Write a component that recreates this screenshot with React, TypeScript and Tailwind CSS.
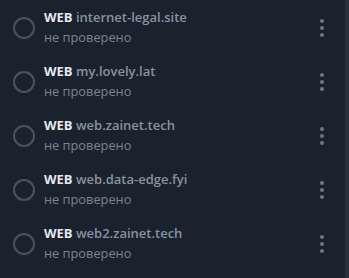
const sites = [
  "internet-legal.site",
  "my.lovely.lat",
  "web.zainet.tech",
  "web.data-edge.fyi",
  "web2.zainet.tech",
];

export default function App() {
  return (
    <div className="flex h-[278px] w-[349px] bg-[#1a222d] font-['Open_Sans',sans-serif]">
      <div className="flex-1 pt-[1px]">
        {sites.map((site) => (
          <div key={site} className="flex h-[54px] items-center">
            <div className="ml-[13px] h-[22px] w-[22px] rounded-full border-2 border-[#4a5461]" />
            <div className="ml-[9px] flex-1 -mt-[3px]">
              <div className="text-[13px] leading-[18px] font-semibold">
                <span className="font-bold text-[#e6e9ec]">WEB</span>{" "}
                <span className="text-[#8793a1]">{site}</span>
              </div>
              <div className="mt-[2px] text-[12.8px] leading-[18px] text-[#7a8592]">
                не проверено
              </div>
            </div>
            <div className="mr-[21px] flex flex-col gap-[3px]">
              <span className="h-[4px] w-[4px] rounded-full bg-[#6e7884]" />
              <span className="h-[4px] w-[4px] rounded-full bg-[#6e7884]" />
              <span className="h-[4px] w-[4px] rounded-full bg-[#6e7884]" />
            </div>
          </div>
        ))}
      </div>
      <div className="w-[4px] bg-[#2a323d]" />
    </div>
  );
}
